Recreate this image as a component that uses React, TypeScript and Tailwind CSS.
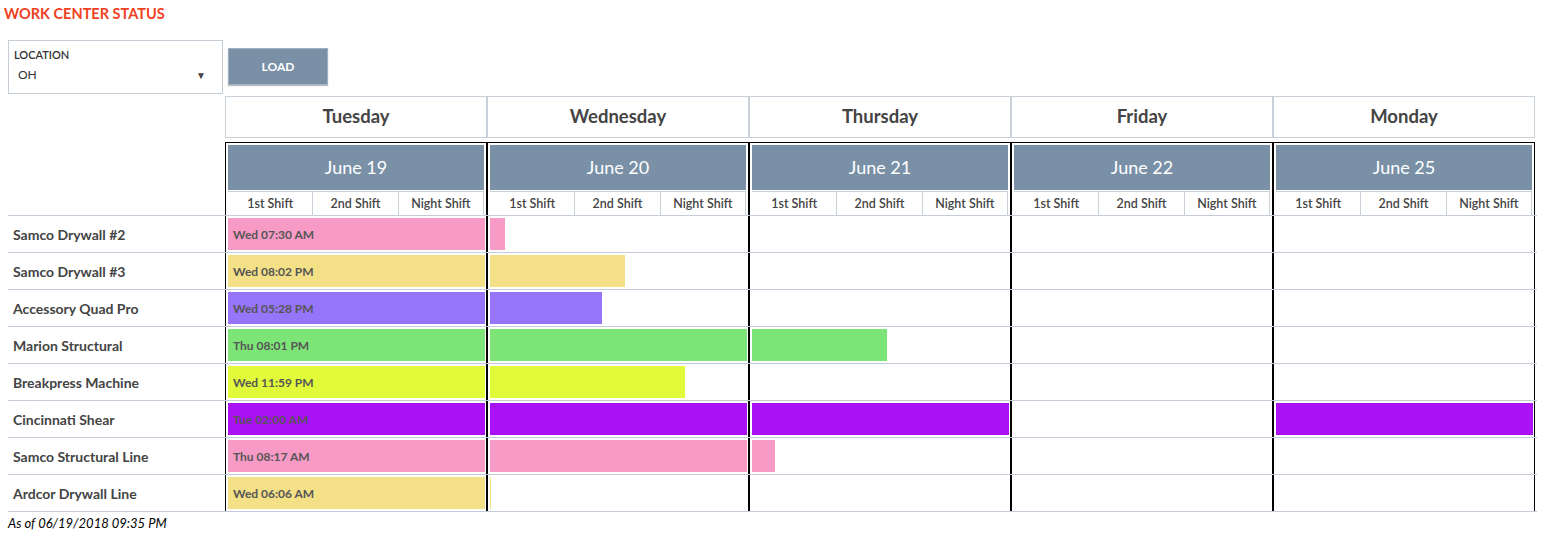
import React from "react";

type Bar = { w: number | "full"; color: string; text?: string };
type Row = { name: string; cells: (Bar | null)[] };

const PINK = "#f79bc6";
const YELLOW = "#f3e087";
const LAV = "#9775fa";
const GREEN = "#7de577";
const LIME = "#e1fb3b";
const VIOLET = "#aa11f5";

const rows: Row[] = [
  { name: "Samco Drywall #2", cells: [{ w: "full", color: PINK, text: "Wed 07:30 AM" }, { w: 15, color: PINK }, null, null, null] },
  { name: "Samco Drywall #3", cells: [{ w: "full", color: YELLOW, text: "Wed 08:02 PM" }, { w: 135, color: YELLOW }, null, null, null] },
  { name: "Accessory Quad Pro", cells: [{ w: "full", color: LAV, text: "Wed 05:28 PM" }, { w: 112, color: LAV }, null, null, null] },
  { name: "Marion Structural", cells: [{ w: "full", color: GREEN, text: "Thu 08:01 PM" }, { w: "full", color: GREEN }, { w: 135, color: GREEN }, null, null] },
  { name: "Breakpress Machine", cells: [{ w: "full", color: LIME, text: "Wed 11:59 PM" }, { w: 195, color: LIME }, null, null, null] },
  { name: "Cincinnati Shear", cells: [{ w: "full", color: VIOLET, text: "Tue 02:00 AM" }, { w: "full", color: VIOLET }, { w: "full", color: VIOLET }, null, { w: "full", color: VIOLET }] },
  { name: "Samco Structural Line", cells: [{ w: "full", color: PINK, text: "Thu 08:17 AM" }, { w: "full", color: PINK }, { w: 23, color: PINK }, null, null] },
  { name: "Ardcor Drywall Line", cells: [{ w: "full", color: YELLOW, text: "Wed 06:06 AM" }, { w: 1, color: YELLOW }, null, null, null] },
];

const days = [
  { day: "Tuesday", date: "June 19" },
  { day: "Wednesday", date: "June 20" },
  { day: "Thursday", date: "June 21" },
  { day: "Friday", date: "June 22" },
  { day: "Monday", date: "June 25" },
];

export default function App() {
  return (
    <div className="w-[1546px] h-[538px] bg-white text-[#444] overflow-hidden" style={{ fontFamily: "Lato, 'Open Sans', sans-serif" }}>
      <div className="h-[40px] pl-[4px] pt-[5px] text-[14.5px] font-bold text-[#ef4122] leading-[18px]">WORK CENTER STATUS</div>
      <div className="flex h-[54px] pl-[8px]">
        <div className="w-[215px] h-[54px] border border-[#c5cdd7] relative">
          <div className="absolute left-[5px] top-[7px] text-[11px] font-semibold text-[#333] leading-[13px]">LOCATION</div>
          <div className="absolute left-[9px] top-[27px] text-[12px] text-[#333] leading-[14px]">OH</div>
          <div className="absolute left-[187px] top-[27px] text-[10px] text-[#444] leading-[14px]">▼</div>
        </div>
        <div className="ml-[5px] mt-[8px] w-[100px] h-[37px] bg-[#7a90a7] border border-[#9fb0c1] shadow-[0_1px_1px_rgba(0,0,0,0.25)] flex items-center justify-center text-white text-[12px] font-bold">
          LOAD
        </div>
      </div>
      <div className="pl-[8px] mt-[2px]">
        {/* Day names */}
        <div className="flex">
          <div className="w-[217px] shrink-0" />
          {days.map((d) => (
            <div key={d.day} className="w-[262px] h-[42px] shrink-0 border border-[#c8d0da] flex items-center justify-center text-[18.5px] font-bold text-[#444]">
              {d.day}
            </div>
          ))}
        </div>
        {/* Dates */}
        <div className="flex mt-[4px]">
          <div className="w-[217px] shrink-0" />
          {days.map((d) => (
            <div key={d.date} className="w-[262px] h-[73px] shrink-0 border-t border-x border-black px-[2px] pt-[2px]">
              <div className="h-[45px] bg-[#7a90a7] flex items-center justify-center text-white text-[18px]">{d.date}</div>
              <div className="h-[25px] mt-[1px] flex border-t border-r border-[#c8d0da] text-[12.5px] font-semibold text-[#444]">
                <div className="flex-1 flex items-center justify-center border-r border-[#c8d0da]">1st Shift</div>
                <div className="flex-1 flex items-center justify-center border-r border-[#c8d0da]">2nd Shift</div>
                <div className="flex-1 flex items-center justify-center">Night Shift</div>
              </div>
            </div>
          ))}
        </div>
        {/* Body */}
        <div className="border-t border-[#c3ccd7] w-[1529px]">
          {rows.map((r) => (
            <div key={r.name} className="flex h-[37px] border-b border-[#c3ccd7]">
              <div className="w-[217px] shrink-0 flex items-center pl-[5px] pt-[1px] text-[14px] font-bold text-[#444]">{r.name}</div>
              {r.cells.map((c, i) => (
                <div key={i} className="w-[262px] shrink-0 border-x border-black py-[2px] pl-[2px] pr-[1px] flex">
                  {c && (
                    <div
                      className={
                        c.text
                          ? "h-full flex items-center pl-[5px] pt-[1px] text-[12px] font-bold text-[#555] whitespace-nowrap"
                          : "h-full shrink-0"
                      }
                      style={{ backgroundColor: c.color, width: c.w === "full" ? "100%" : `${c.w}px` }}
                    >
                      {c.text}
                    </div>
                  )}
                </div>
              ))}
            </div>
          ))}
        </div>
        <div className="pt-[4px] text-[13px] italic text-black leading-[15px]">As of 06/19/2018 09:35 PM</div>
      </div>
    </div>
  );
}
